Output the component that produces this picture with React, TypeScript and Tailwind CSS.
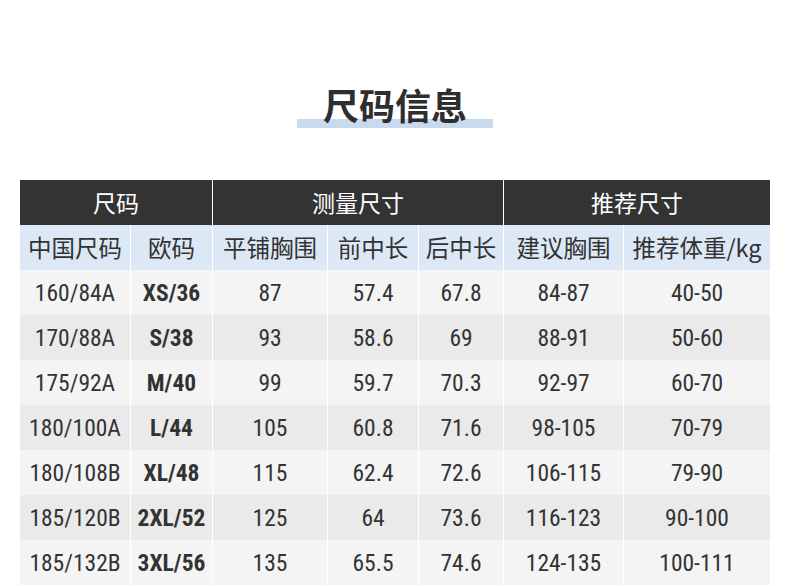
import React from "react";

const cols = "grid grid-cols-[110px_82px_115px_91px_85px_120px_147px]";

const subHeaders = ["中国尺码", "欧码", "平铺胸围", "前中长", "后中长", "建议胸围", "推荐体重/kg"];

const rows: string[][] = [
  ["160/84A", "XS/36", "87", "57.4", "67.8", "84-87", "40-50"],
  ["170/88A", "S/38", "93", "58.6", "69", "88-91", "50-60"],
  ["175/92A", "M/40", "99", "59.7", "70.3", "92-97", "60-70"],
  ["180/100A", "L/44", "105", "60.8", "71.6", "98-105", "70-79"],
  ["180/108B", "XL/48", "115", "62.4", "72.6", "106-115", "79-90"],
  ["185/120B", "2XL/52", "125", "64", "73.6", "116-123", "90-100"],
  ["185/132B", "3XL/56", "135", "65.5", "74.6", "124-135", "100-111"],
];

const cjk = "[font-family:'Noto_Sans_CJK_SC','Noto_Sans',sans-serif]";
const num = "[font-family:Roboto,'Noto_Sans_CJK_SC',sans-serif] [font-stretch:80%]";

export default function App() {
  return (
    <div className="w-[790px] h-[586px] bg-white overflow-hidden">
      <div className="flex justify-center pt-[86px]">
        <div className="relative px-[26px]">
          <div className="absolute left-0 right-0 top-[33px] h-[9px] bg-[#c9daef]" />
          <span className={`relative block text-[36px] leading-[36px] font-bold text-[#2e2e2e] ${cjk}`}>
            尺码信息
          </span>
        </div>
      </div>

      <div className="mt-[58px] mx-[20px] w-[750px]">
        <div className={`${cols} h-[45px] bg-[#333333] text-white text-[23px] ${cjk}`}>
          <div className="col-span-2 flex items-center justify-center">尺码</div>
          <div className="col-span-3 flex items-center justify-center border-l border-white">测量尺寸</div>
          <div className="col-span-2 flex items-center justify-center border-l border-white">推荐尺寸</div>
        </div>
        <div className={`${cols} h-[45px] bg-[#dce8f6] text-[#333] text-[23.5px] ${cjk}`}>
          {subHeaders.map((h, i) => (
            <div
              key={h}
              className={`flex items-center justify-center whitespace-nowrap ${i > 0 ? "border-l border-white" : ""}`}
            >
              {h}
            </div>
          ))}
        </div>
        {rows.map((r, ri) => (
          <div
            key={ri}
            className={`${cols} h-[45px] text-[#333] text-[23.5px] ${num} ${ri % 2 === 0 ? "bg-[#f4f4f4]" : "bg-[#eaeaea]"}`}
          >
            {r.map((c, ci) => (
              <div
                key={ci}
                className={`flex items-center justify-center whitespace-nowrap pt-[3px] ${ci > 0 ? "border-l border-white" : ""} ${ci === 1 ? "font-bold" : ""}`}
              >
                {c}
              </div>
            ))}
          </div>
        ))}
      </div>
    </div>
  );
}
